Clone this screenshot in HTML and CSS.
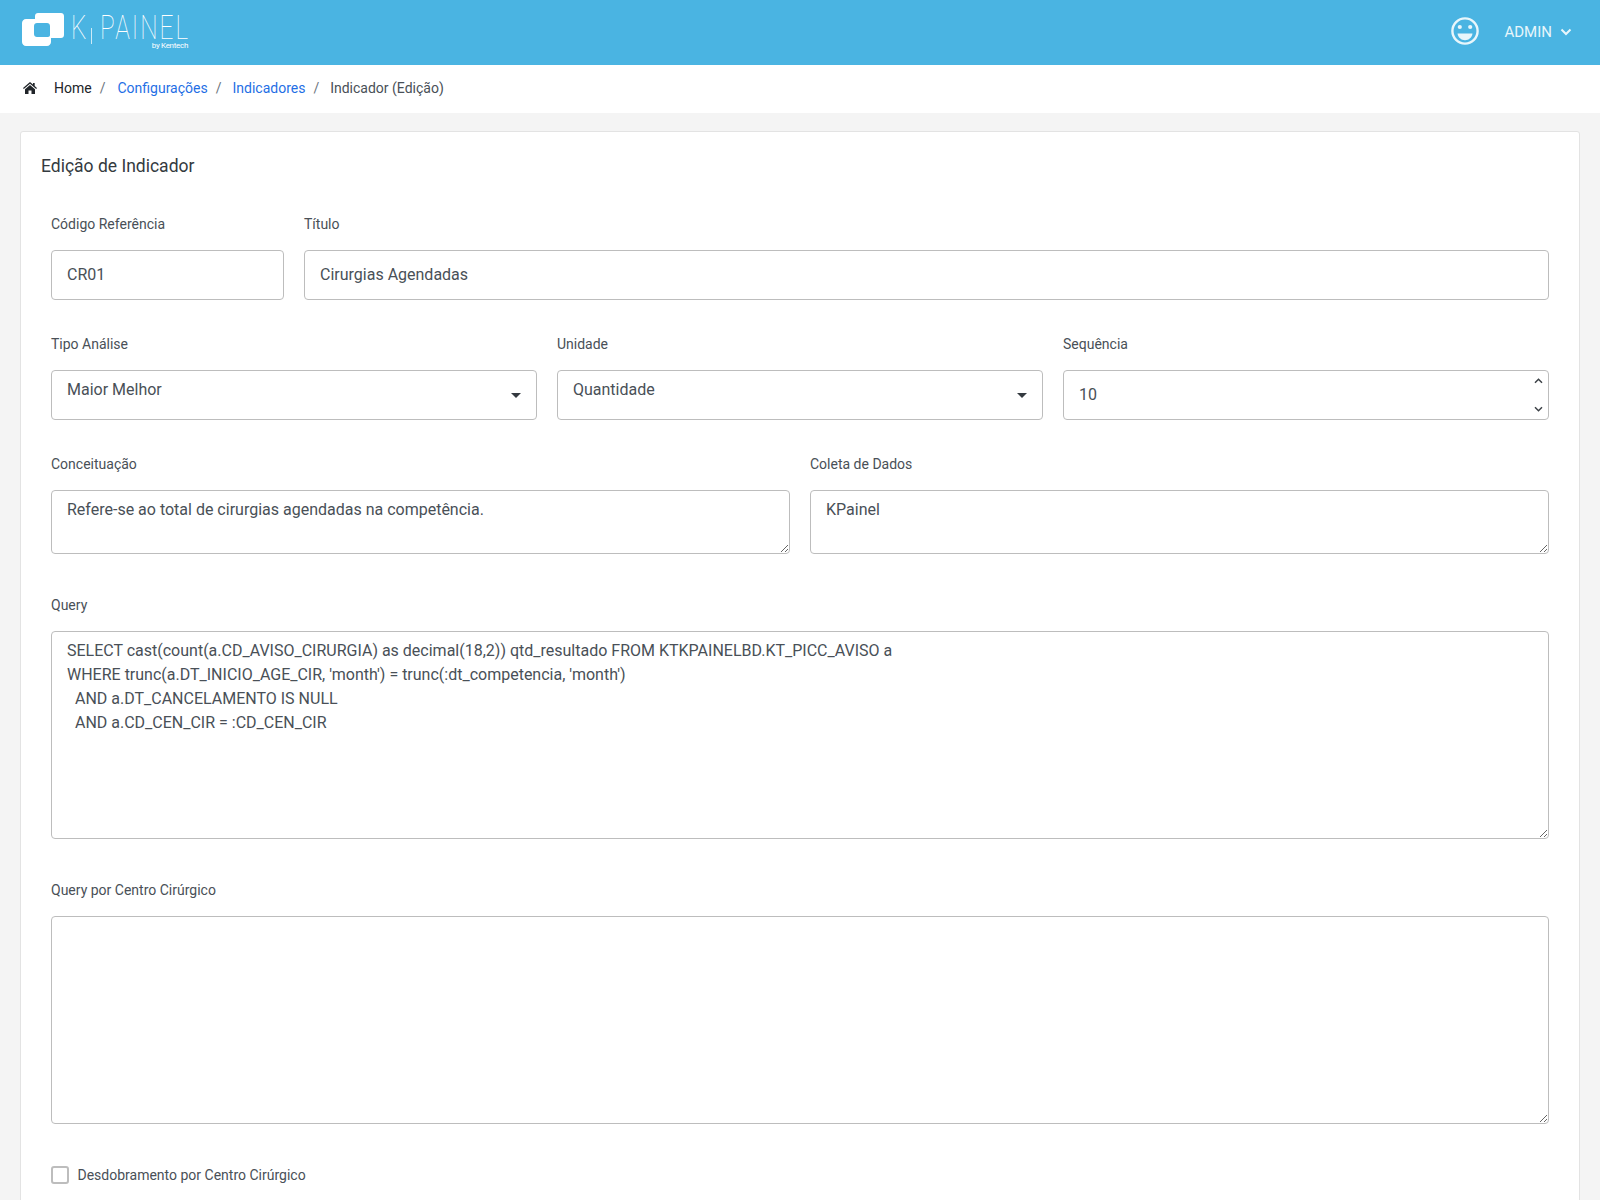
FILE: index.html
```html
<!DOCTYPE html>
<html lang="pt-BR">
<head>
  <title>KPainel - Indicador (Edição)</title>
  <meta charset="utf-8">
  <link rel="stylesheet" href="styles.css">
</head>
<body>

<header class="topbar">
  <a class="logo" href="#">
    <svg class="logo-mark" width="42" height="33" viewBox="0 0 42 33">
      <path fill="#fff" fill-rule="evenodd" d="M13 3c0-1.700 1.300-3 3-3h23c1.700 0 3 1.300 3 3v19c0 1.700-1.300 3-3 3H29v4c0 2.200-1.800 4-4 4H4c-2.200 0-4-1.800-4-4V10c0-2.200 1.800-4 4-4h9zM15 10c-1.700 0-3 1.300-3 3v8c0 1.700 1.300 3 3 3h11c1.200 0 2-.8 2-2v-9c0-1.700-1.300-3-3-3z"/>
    </svg>
    <span class="logo-text">
      <span class="logo-name">K<i class="logo-bar"></i>PAINEL</span>
      <span class="logo-by">by Kentech</span>
    </span>
  </a>
  <div class="user">
    <svg class="user-face" width="28" height="28" viewBox="0 0 28 28">
      <circle cx="14" cy="14" r="12.600" fill="none" stroke="#e8f6fb" stroke-width="2.400"/>
      <circle cx="8.800" cy="10" r="2.100" fill="#e8f6fb"/>
      <circle cx="19.200" cy="10" r="2.100" fill="#e8f6fb"/>
      <path d="M6.500 16.500h15c-.5 4-3.800 6.700-7.500 6.700s-7-2.700-7.500-6.700z" fill="#e8f6fb"/>
    </svg>
    <span class="user-name">ADMIN</span>
    <svg class="user-caret" width="12" height="8" viewBox="0 0 12 8">
      <path d="M1.500 1.500 6 6l4.500-4.500" fill="none" stroke="#e8f6fb" stroke-width="2"/>
    </svg>
  </div>
</header>

<nav class="crumbs">
  <svg class="crumb-home" width="14" height="12" viewBox="0 0 14 12">
    <path fill="#212529" d="M7 0 0 6l.8.9L7 1.700l6.200 5.200.8-.9-2.300-2V1H10v1.600zM2 7.200V12h3.500V8.500h3V12H12V7.200L7 3z"/>
  </svg>
  <a class="crumb crumb-first" href="#">Home</a><span class="sep">/</span>
  <a class="crumb crumb-link" href="#">Configurações</a><span class="sep">/</span>
  <a class="crumb crumb-link" href="#">Indicadores</a><span class="sep">/</span>
  <span class="crumb crumb-current">Indicador (Edição)</span>
</nav>

<main class="content">
  <section class="card">
    <h1 class="card-title">Edição de Indicador</h1>
    <form class="form">
      <div class="field span-2">
        <label>Código Referência</label>
        <input class="control" type="text" value="CR01">
      </div>
      <div class="field span-10">
        <label>Título</label>
        <input class="control" type="text" value="Cirurgias Agendadas">
      </div>

      <div class="field span-4">
        <label>Tipo Análise</label>
        <div class="select">Maior Melhor</div>
      </div>
      <div class="field span-4">
        <label>Unidade</label>
        <div class="select">Quantidade</div>
      </div>
      <div class="field span-4">
        <label>Sequência</label>
        <div class="spinner">
          <input class="control" type="text" value="10">
          <svg class="spin spin-up" width="9" height="6" viewBox="0 0 9 6"><path d="M1 4.800 4.500 1.300 8 4.800" fill="none" stroke="#3c4146" stroke-width="1.500"/></svg>
          <svg class="spin spin-down" width="9" height="6" viewBox="0 0 9 6"><path d="M1 1.200l3.500 3.500L8 1.200" fill="none" stroke="#3c4146" stroke-width="1.500"/></svg>
        </div>
      </div>

      <div class="field field-tall span-6">
        <label>Conceituação</label>
        <textarea class="control area-small">Refere-se ao total de cirurgias agendadas na competência.</textarea>
      </div>
      <div class="field field-tall span-6">
        <label>Coleta de Dados</label>
        <textarea class="control area-small">KPainel</textarea>
      </div>

      <div class="field field-tall span-12">
        <label>Query</label>
        <textarea class="control area-big">SELECT cast(count(a.CD_AVISO_CIRURGIA) as decimal(18,2)) qtd_resultado FROM KTKPAINELBD.KT_PICC_AVISO a
WHERE trunc(a.DT_INICIO_AGE_CIR, 'month') = trunc(:dt_competencia, 'month')
  AND a.DT_CANCELAMENTO IS NULL
  AND a.CD_CEN_CIR = :CD_CEN_CIR</textarea>
      </div>
      <div class="field field-tall span-12">
        <label>Query por Centro Cirúrgico</label>
        <textarea class="control area-big"></textarea>
      </div>

      <div class="check span-12">
        <span class="check-box"></span>
        <span class="check-label">Desdobramento por Centro Cirúrgico</span>
      </div>
    </form>
  </section>
</main>

</body>
</html>
```

FILE: styles.css
```css
html {
  height: 100%;
  overflow: hidden;
}
body {
  margin: 0;
  background: #f4f4f4;
  color: #343a40;
  font-family: Roboto, sans-serif;
  font-size: 14px;
}
a {
  text-decoration: none;
}

.topbar {
  box-sizing: border-box;
  height: 65px;
  background: #4ab4e2;
  display: flex;
  align-items: center;
  justify-content: space-between;
  padding: 0 28px 2px 22px;
}
.logo {
  display: flex;
  align-items: flex-start;
  gap: 7px;
  align-self: flex-start;
  color: #fff;
}
.logo-mark {
  margin-top: 13px;
}
.logo-text {
  display: flex;
  flex-direction: column;
  align-items: flex-end;
  width: 117px;
}
.logo-name {
  align-self: flex-start;
  height: 24px;
  margin-top: 15px;
  font-size: 34px;
  font-weight: 100;
  line-height: 24px;
  letter-spacing: 2.800px;
  white-space: nowrap;
  transform: scaleX(.72);
  transform-origin: left top;
}
.logo-bar {
  display: inline-block;
  width: 1px;
  height: 16px;
  background: #fff;
  margin: 0 11px 0 4px;
  vertical-align: -5px;
}
.logo-by {
  margin-top: 2px;
  font-size: 8px;
  line-height: 10px;
  letter-spacing: -.3px;
}

.user {
  display: flex;
  align-items: center;
  color: #e8f6fb;
}
.user-face {
  margin: 0 25px 2px 0;
}
.user-name {
  font-size: 15px;
  margin-right: 8px;
}

.crumbs {
  box-sizing: border-box;
  height: 48px;
  background: #fff;
  display: flex;
  align-items: center;
  padding: 0 0 2px 23px;
}
.crumb-home {
  margin-right: 17px;
}
.crumb-first {
  color: #212529;
}
.crumb-first + .sep {
  margin-right: 12px;
}
.crumb-link {
  color: #1f6fe5;
}
.crumb-current {
  color: #495057;
}
.sep {
  color: #6c757d;
  margin: 0 11px 0 8px;
}

.content {
  padding: 18px 20px 0;
}
.card {
  background: #fff;
  border: 1px solid #e3e3e3;
  border-radius: 3px;
  padding: 22px 20px 40px;
}
.card-title {
  margin: 0;
  font-size: 17.500px;
  font-weight: 400;
  line-height: 24px;
  color: #343a40;
}
.form {
  display: grid;
  grid-template-columns: repeat(12, 1fr);
  column-gap: 20px;
  padding: 0 10px;
  margin-top: 36px;
}
.span-2 { grid-column: span 2; }
.span-4 { grid-column: span 4; }
.span-6 { grid-column: span 6; }
.span-10 { grid-column: span 10; }
.span-12 { grid-column: span 12; }

.field {
  display: flex;
  flex-direction: column;
  margin-bottom: 34px;
}
.field-tall {
  margin-bottom: 41px;
}
.field label {
  font-size: 14px;
  line-height: 20px;
  margin-bottom: 16px;
  color: #495057;
}
.control, .select {
  box-sizing: border-box;
  width: 100%;
  margin: 0;
  border: 1px solid #bdbdbd;
  border-radius: 4px;
  background: #fff;
  color: #495057;
  font-family: Roboto, sans-serif;
  font-size: 16px;
  outline: none;
}
input.control {
  height: 50px;
  padding: 0 15px 2px;
}
textarea.control {
  display: block;
  padding: 7px 15px;
  line-height: 24px;
}
.area-small {
  height: 64px;
}
.area-big {
  height: 208px;
}

.select {
  position: relative;
  height: 50px;
  padding: 7px 15px;
  line-height: 24px;
}
.select::after {
  content: "";
  position: absolute;
  right: 15px;
  top: 22px;
  border-top: 5px solid #343a40;
  border-left: 5px solid transparent;
  border-right: 5px solid transparent;
}

.spinner {
  position: relative;
}
.spin {
  position: absolute;
  right: 6px;
}
.spin-up {
  top: 8px;
}
.spin-down {
  bottom: 8px;
}

.check {
  display: flex;
  align-items: center;
  gap: 8.500px;
  margin-top: 1px;
}
.check-box {
  box-sizing: border-box;
  width: 18px;
  height: 18px;
  border: 2px solid #bdbdbd;
  border-radius: 3px;
}
.check-label {
  color: #495057;
}
```
